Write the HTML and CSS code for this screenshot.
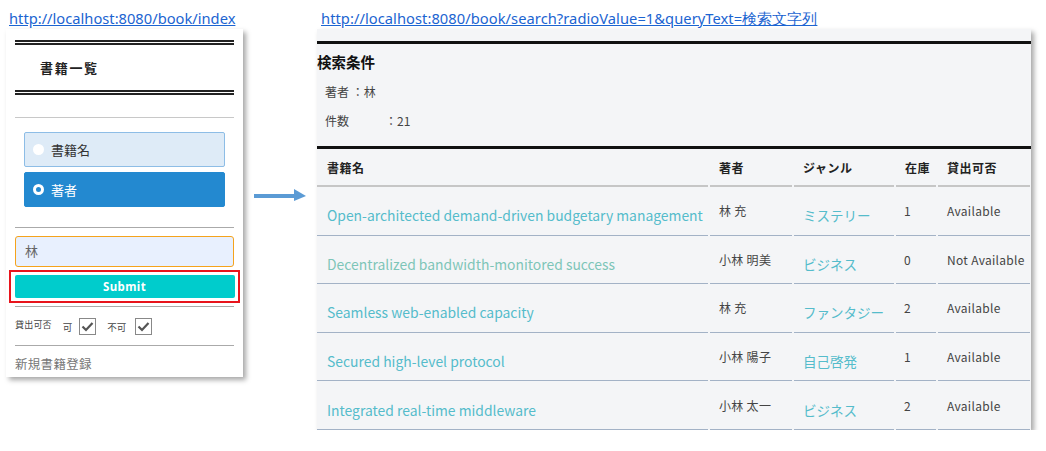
FILE: index.html
```html
<!DOCTYPE html>
<html lang="ja">
<head>
<meta charset="utf-8">
<title>書籍一覧</title>
<link rel="stylesheet" href="styles.css">
</head>
<body>
<div class="page">
  <div class="col col-left">
    <a class="url" href="#">http://localhost:8080/book/index</a>
    <div class="card side">
      <div class="dbl"></div>
      <div class="brand">書籍一覧</div>
      <div class="dbl"></div>
      <div class="sep sep-light sep-top"></div>
      <div class="radios">
        <label class="radio"><span class="dot"></span>書籍名</label>
        <label class="radio radio-on"><span class="dot"></span>著者</label>
      </div>
      <div class="sep"></div>
      <div class="query">林</div>
      <div class="mark"><button class="submit">Submit</button></div>
      <div class="sep"></div>
      <div class="filters">
        <span class="flabel">貸出可否</span>
        <span class="fopt">可</span>
        <span class="check"><svg viewBox="0 0 17 17" width="17" height="17"><path d="M3.5 8.5 L7 12 L13.5 5" fill="none" stroke="#555" stroke-width="2.2"/></svg></span>
        <span class="fopt fopt2">不可</span>
        <span class="check"><svg viewBox="0 0 17 17" width="17" height="17"><path d="M3.5 8.5 L7 12 L13.5 5" fill="none" stroke="#555" stroke-width="2.2"/></svg></span>
      </div>
      <div class="sep"></div>
      <a class="newbook" href="#">新規書籍登録</a>
    </div>
  </div>
  <svg class="arrow" width="54" height="14" viewBox="0 0 54 14"><rect x="0" y="5" width="42" height="4" fill="#5b9bd5"/><polygon points="40,0 52,7 40,12" fill="#5b9bd5"/></svg>
  <div class="col col-right">
    <a class="url url-right" href="#">http://localhost:8080/book/search?radioValue=1&amp;queryText=検索文字列</a>
    <div class="card main">
      <div class="cond">
        <div class="cond-title">検索条件</div>
        <div class="cond-row">著者 ：林</div>
        <div class="cond-row"><span class="cond-key">件数</span>：21</div>
      </div>
      <table class="books">
        <colgroup>
          <col class="c-title"><col class="c-author"><col class="c-genre"><col class="c-stock"><col class="c-avail">
        </colgroup>
        <thead>
          <tr><th>書籍名</th><th>著者</th><th>ジャンル</th><th>在庫</th><th>貸出可否</th></tr>
        </thead>
        <tbody>
          <tr><td><a class="lnk" href="#">Open-architected demand-driven budgetary management</a></td><td>林 充</td><td><a class="lnk lnk-genre" href="#">ミステリー</a></td><td>1</td><td>Available</td></tr>
          <tr><td><a class="lnk lnk-visited" href="#">Decentralized bandwidth-monitored success</a></td><td>小林 明美</td><td><a class="lnk lnk-genre" href="#">ビジネス</a></td><td>0</td><td>Not Available</td></tr>
          <tr><td><a class="lnk" href="#">Seamless web-enabled capacity</a></td><td>林 充</td><td><a class="lnk lnk-genre" href="#">ファンタジー</a></td><td>2</td><td>Available</td></tr>
          <tr><td><a class="lnk" href="#">Secured high-level protocol</a></td><td>小林 陽子</td><td><a class="lnk lnk-genre" href="#">自己啓発</a></td><td>1</td><td>Available</td></tr>
          <tr><td><a class="lnk" href="#">Integrated real-time middleware</a></td><td>小林 太一</td><td><a class="lnk lnk-genre" href="#">ビジネス</a></td><td>2</td><td>Available</td></tr>
        </tbody>
      </table>
    </div>
  </div>
</div>
</body>
</html>
```
FILE: styles.css
```css
html, body {
  margin: 0;
  padding: 0;
  background: #fff;
}
body {
  font-family: "Noto Sans CJK JP", "Noto Sans", sans-serif;
  color: #333;
}
.page {
  display: flex;
  align-items: flex-start;
}
.col {
  display: flex;
  flex-direction: column;
}
.col-left {
  margin-left: 6px;
  width: 237px;
}
.url {
  font-family: "Noto Sans", sans-serif;
  font-size: 14.7px;
  line-height: 20px;
  color: #1b64d1;
  text-decoration: underline;
  margin: 8px 0 1px 3px;
  white-space: nowrap;
}
.card {
  background: #fff;
  box-shadow: 3px 3px 5px rgba(0,0,0,0.35);
}
.side {
  padding: 11px 9px 0 9px;
  height: 337px;
  box-sizing: content-box;
}
.dbl {
  border-top: 5px double #222;
}
.brand {
  height: 45px;
  line-height: 45px;
  padding-left: 25px;
  font-size: 13px;
  font-weight: bold;
  letter-spacing: 1.7px;
  color: #222;
}
.sep {
  border-top: 1px solid #aaa;
}
.sep-light {
  border-color: #c8c8c8;
}
.sep-top {
  margin-top: 22px;
}
.radios {
  display: flex;
  flex-direction: column;
  gap: 5px;
  padding: 14px 9px 20px 9px;
}
.radio {
  display: flex;
  align-items: center;
  height: 33px;
  border: 1px solid #8dbde6;
  border-radius: 2px;
  background: #deebf7;
  font-size: 13px;
  color: #333;
  padding-left: 8px;
  gap: 7px;
}
.radio-on {
  background: #2389d0;
  border-color: #2389d0;
  color: #fff;
}
.dot {
  width: 11px;
  height: 11px;
  border-radius: 50%;
  background: #fff;
  box-sizing: border-box;
}
.radio-on .dot {
  border: 3px solid #fff;
  background: #2389d0;
}
.query {
  margin-top: 8px;
  height: 31px;
  box-sizing: border-box;
  border: 1.5px solid #f5a31c;
  border-radius: 3px;
  background: #e8f0fe;
  font-size: 13px;
  line-height: 28px;
  color: #666;
  padding-left: 9px;
}
.mark {
  margin: 3px -6px 3px -6px;
  border: 2.5px solid #e8141c;
  padding: 3px 3.5px;
}
.submit {
  display: block;
  width: 100%;
  height: 23px;
  border: none;
  border-radius: 2px;
  background: #00cccc;
  color: #fff;
  font-family: "Noto Sans", sans-serif;
  font-size: 11.5px;
  font-weight: bold;
  letter-spacing: 0.4px;
  padding: 0;
}
.filters {
  display: flex;
  align-items: center;
  height: 37px;
  padding-top: 1px;
}
.flabel {
  font-size: 9px;
  color: #444;
  margin-top: -5px;
  letter-spacing: 0.2px;
}
.fopt {
  font-size: 9.5px;
  color: #444;
  margin-left: 11px;
  margin-right: 7px;
}
.fopt2 {
  margin-left: 11px;
  margin-right: 9px;
}
.check {
  width: 17px;
  height: 17px;
  box-sizing: border-box;
  border: 1px solid #888;
  background: #fff;
  display: flex;
}
.check svg {
  margin: -1px;
}
.newbook {
  display: block;
  margin-top: 8px;
  font-size: 12.5px;
  color: #777;
  text-decoration: none;
  letter-spacing: 0.3px;
}
.arrow {
  margin: 189px 0 0 11px;
  flex: none;
}
.col-right {
  margin-left: 9px;
  width: 714px;
}
.url-right {
  margin-left: 4px;
  letter-spacing: 0.05px;
}
.main {
  background: #f4f5f7;
  height: 401px;
  overflow: hidden;
}
.cond {
  margin-top: 12px;
  border-top: 3px solid #111;
  border-bottom: 3px solid #111;
  height: 102px;
  box-sizing: content-box;
}
.cond-title {
  margin-top: 8px;
  font-size: 14.5px;
  font-weight: bold;
  color: #111;
  line-height: 20px;
}
.cond-row {
  font-size: 12px;
  color: #444;
  margin-left: 8px;
  line-height: 18px;
  margin-top: 11px;
}
.cond-key {
  display: inline-block;
  width: 60px;
}
.books {
  table-layout: fixed;
  border-collapse: separate;
  border-spacing: 2px 0;
  margin-left: -2px;
  width: 717px;
}
.c-title { width: 391px; }
.c-author { width: 82px; }
.c-genre { width: 100px; }
.c-stock { width: 40px; }
.c-avail { width: 92px; }
.books th {
  text-align: left;
  font-size: 12px;
  font-weight: bold;
  color: #222;
  height: 36px;
  padding: 0 0 0 9px;
  border-bottom: 2px solid #c6c6c6;
  letter-spacing: 0.5px;
}
.books th:first-child,
.books td:first-child {
  padding-left: 10px;
}
.books td {
  height: 47.6px;
  padding: 0 0 0 9px;
  border-bottom: 1px solid #a3b2c6;
  font-size: 12px;
  color: #444;
  vertical-align: middle;
  white-space: nowrap;
  letter-spacing: 0.3px;
}
.books td:nth-child(4) { padding-left: 8px; }
.lnk {
  display: inline-block;
  margin-top: 9px;
  font-size: 13.9px;
  color: #55bccb;
  text-decoration: none;
  letter-spacing: 0;
}
.lnk-genre {
  font-size: 13.5px;
}
.lnk-visited {
  color: #7ec5b8;
}
```
